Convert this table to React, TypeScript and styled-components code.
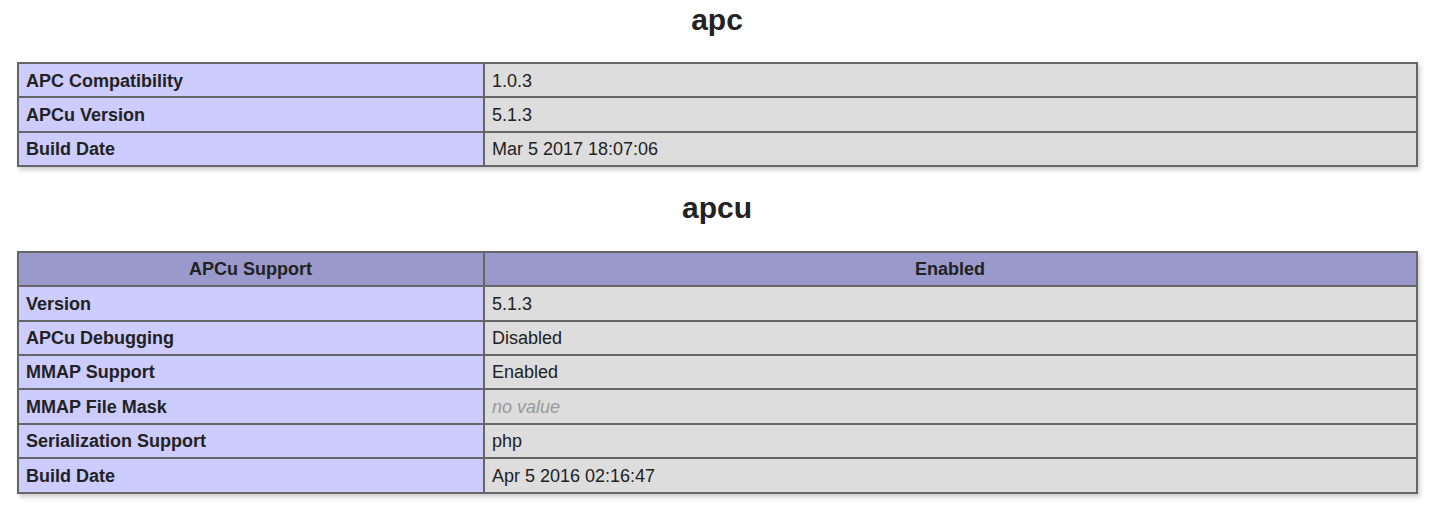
import styled, { createGlobalStyle } from "styled-components";

const GlobalStyle = createGlobalStyle`
  html, body {
    margin: 0;
    padding: 0;
    background: #fff;
  }
  body {
    color: #222;
    font-family: "Liberation Sans", Arial, sans-serif;
  }
`;

type Row = { name: string; value: string; empty?: boolean };

const apcRows: Row[] = [
  { name: "APC Compatibility", value: "1.0.3" },
  { name: "APCu Version", value: "5.1.3" },
  { name: "Build Date", value: "Mar 5 2017 18:07:06" },
];

const apcuRows: Row[] = [
  { name: "Version", value: "5.1.3" },
  { name: "APCu Debugging", value: "Disabled" },
  { name: "MMAP Support", value: "Enabled" },
  { name: "MMAP File Mask", value: "no value", empty: true },
  { name: "Serialization Support", value: "php" },
  { name: "Build Date", value: "Apr 5 2016 02:16:47" },
];

const InfoTable = ({ head, rows }: { head?: [string, string]; rows: Row[] }) => (
  <Table>
    <tbody>
      {head && (
        <tr>
          <HeadCell>{head[0]}</HeadCell>
          <HeadCell>{head[1]}</HeadCell>
        </tr>
      )}
      {rows.map((r) => (
        <tr key={r.name}>
          <KeyCell>{r.name}</KeyCell>
          <ValueCell>{r.empty ? <i>{r.value}</i> : r.value}</ValueCell>
        </tr>
      ))}
    </tbody>
  </Table>
);

export default function App() {
  return (
    <>
      <GlobalStyle />
      <Page>
        <Title $first>apc</Title>
        <InfoTable rows={apcRows} />
        <Title>apcu</Title>
        <InfoTable head={["APCu Support", "Enabled"]} rows={apcuRows} />
      </Page>
    </>
  );
}

const Page = styled.div`
  text-align: center;
  font-size: 24px;
  padding-right: 4px;
`;

const Title = styled.h2<{ $first?: boolean }>`
  font-size: 30px;
  line-height: 34.5px;
  font-weight: bold;
  margin: ${(p) => (p.$first ? "2.5px" : "24px")} 0 25px;
`;

const Table = styled.table`
  border-collapse: collapse;
  border: 0;
  width: 1401px;
  margin: 24px auto;
  text-align: left;
  box-shadow: 1.5px 3px 4.5px #ccc;
`;

const Cell = styled.td`
  border: 2px solid #666;
  font-size: 18px;
  line-height: 20.4px;
  vertical-align: baseline;
  padding: 6.5px 7.5px 5.5px;
`;

const KeyCell = styled(Cell)`
  background-color: #ccf;
  width: 449px;
  font-weight: bold;
`;

const ValueCell = styled(Cell)`
  background-color: #ddd;
  max-width: 450px;
  overflow-x: auto;
  word-wrap: break-word;

  i {
    color: #999;
  }
`;

const HeadCell = styled.th`
  border: 2px solid #666;
  font-size: 18px;
  line-height: 20.4px;
  vertical-align: baseline;
  padding: 6.5px 7.5px 5.5px;
  background-color: #99c;
  font-weight: bold;
  text-align: center;
`;
